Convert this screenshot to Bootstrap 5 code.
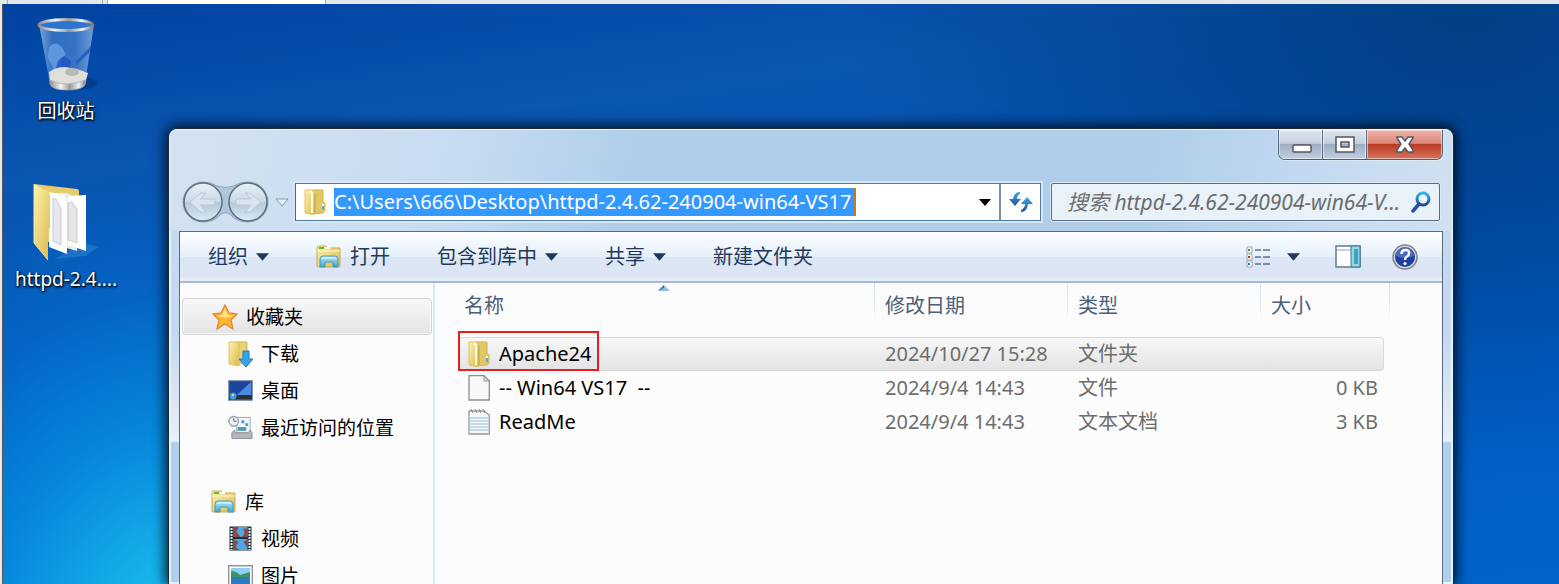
<!DOCTYPE html>
<html lang="zh-CN">
<head>
<meta charset="utf-8">
<meta name="viewport" content="width=device-width, initial-scale=1">
<title>httpd-2.4.62-240904-win64-VS17</title>
<link rel="stylesheet" href="https://cdn.jsdelivr.net/npm/bootstrap@5.3.0/dist/css/bootstrap.min.css">
<style>
body{font:20px/26px "Noto Sans","Noto Sans CJK SC",sans-serif;color:#000;background:#e6e8ea}
a{color:inherit;text-decoration:none}
svg{flex:none;display:block}
.host-strip{height:4px;background:#e3e6ea}
.host-strip i{border-right:1px solid #a9abad;border-left:1px solid #a9abad}
.host-strip .tab-a{width:96px;margin-left:7px}
.host-strip .tab-b{width:219px;margin-left:4px;background:#fff}
.desktop{margin-left:2px;border-left:1px solid #55585c;background:
 radial-gradient(ellipse 420px 460px at 12% 110%,#22c8f0 0,#14ace9 22%,#078cdfdd 48%,#0570d088 76%,#0568c800 100%),
 radial-gradient(ellipse 620px 460px at 94% 0,#003f82 0,#00408caa 45%,#00408c00 100%),
 linear-gradient(172deg,#0042a2 0,#0a56b0 22%,#0058bd 55%,#0064cc 100%)}
.shortcuts{width:126px;padding-top:10px;color:#fff;text-shadow:1px 1px 2px #000,0 1px 3px #000;font-size:19px}
.shortcuts a{height:168px}
.win{margin:124px 105px 0 39px;border:1px solid #1d2a36;border-bottom:0;border-radius:9px 9px 0 0;padding:0 10px;
 box-shadow:0 0 14px 2px #000c20,inset 0 0 0 2px #e5f1fb;
 background:linear-gradient(#c8dcf0 0,#c3d9f0 45%,#e8f0f8 312px,#b0cfec 314px)}
.win-top{margin:0 -9px;padding:0 9px;border-top:1px solid #eaf4fc;background:linear-gradient(100deg,#d3e2f2 0,#c8dcf1 22%,#b0ceea 36%,#b0ceea 76%,#c8dcf1 92%,#cfe1f2 100%);border-radius:8px 8px 0 0}
.caption-btns{height:30px;border:1px solid #4e5f72;border-top:0;border-radius:0 0 7px 7px;overflow:hidden;box-shadow:0 0 0 1px #e7f1fa99}
.caption-btns button{border:0;padding:0;border-right:1px solid #5b6b7d;width:44px;overflow:hidden;background:linear-gradient(#dfe7f0 0,#c5d0dc 46%,#9eafc2 50%,#c0cfe0 100%);box-shadow:inset 0 0 0 1px #ffffff88}
.caption-btns .btn-x{width:75px;border-right:0;background:linear-gradient(#eeb3a8 0,#dd8577 46%,#b93a22 50%,#d8745c 100%)}
.nav-row{padding:21px 3px 8px 2px}
.nav-row button{border:0;background:none;padding:0}
.addr{height:38px;margin:0 10px 0 2px;border:1px solid #4f7ea6;border-left-color:#56697c;background:#fff;box-shadow:0 0 0 2px #d5e7f6}
.addr input,.find input{border:0;outline:0;background:none;min-width:0;padding:0}
.addr label,.find label{display:contents}
.path-text{flex:0 0 522px;height:28px;line-height:28px;background:#3399ff!important;color:#fff;border-right:2px solid #c8782c!important}
.go{width:41px;height:36px;border-left:2px solid #7890a8!important}
.find{width:389px;height:38px;border:1px solid #5b6d80;border-radius:2px;background:#e9f1f9;box-shadow:0 0 0 1px #d9e9f7;padding:0 8px 0 15px}
.find input{font-style:italic;font-size:21px;height:34px;line-height:32px;color:#6d6d6d}
.find input::placeholder{color:#6d6d6d;opacity:1}
.client{border:1px solid #5b6b7d;border-bottom:0;background:#fcfcfc}
.cmdbar{height:51px;background:linear-gradient(#fff 0,#f3f8fe 20%,#e6f0fa 50%,#dce6f4 52%,#dbe5f4 92%,#e6edf8 94%);border-bottom:2px solid #a7bad3;color:#1e395b;padding:0 24px 0 28px}
.cmdbar button{border:0;background:none;padding:0;color:inherit;line-height:26px}
.cmdbar .cmd{margin-right:47px}
.cmdbar .view-pane{margin:0 31px 0 35px}
.side{width:255px;border-right:2px solid #dce8f6;padding:15px 1px 0 2px;font-size:19px}
.side a{height:37px;padding-left:46px;gap:8px}
.side .group-head{padding-left:29px}
.side .picked{border:1px solid #d4d4d4;border-radius:4px;background:linear-gradient(#f8f8f8,#e4e4e4);box-shadow:inset 0 0 0 1px #f8f8f8}
.side .libs{margin-top:37px}
.files{margin:0 58px 0 24px;table-layout:fixed;border-collapse:separate;border-spacing:0;flex:1 1 0;width:0}
.files th{height:54px;font-weight:400;color:#4c607a;vertical-align:top;padding:10px 0 0 10px;position:relative}
.files th:first-child{padding-left:5px}
.files th+th::before,.files th:last-child::after{content:"";position:absolute;left:-1px;top:0;width:1px;height:38px;background:linear-gradient(#cfe0f3,#e8eff8 70%,#fcfcfc)}
.files th:last-child::after{left:auto;right:-6px}
.files td{height:34px;padding:0 0 0 10px;color:#6d6d6d;position:relative;white-space:pre}
.files td:first-child{padding-left:9px}
.files td:last-child{text-align:right;padding-right:6px}
.files td a{color:#000;gap:9px}
.files .hit td{background:linear-gradient(#f8f8f8,#e3e3e3);border:solid #d9d9d9;border-width:1px 0}
.files .hit td:first-child{border-left-width:1px;border-radius:4px 0 0 4px;padding-left:8px}
.files .hit td:last-child{border-right-width:1px;border-radius:0 4px 4px 0}
.redmark{position:absolute;left:-2px;top:-7px;width:141px;height:40px;border:2px solid #ec1c24}
.sortmark{position:absolute;left:199px;top:1px}
.col-date,.col-kind{width:193px}.col-size{width:123px}
</style>
</head>
<body class="vh-100 overflow-hidden d-flex flex-column">
<svg width="0" height="0" class="position-absolute" aria-hidden="true">
 <defs>
  <linearGradient id="gold" x2="1" y2="1"><stop offset="0" stop-color="#fdf2b0"/><stop offset="1" stop-color="#dcb94a"/></linearGradient>
  <linearGradient id="aqua" x2="0" y2="1"><stop offset="0" stop-color="#b5ecfa"/><stop offset="1" stop-color="#3fa2cf"/></linearGradient>
  <linearGradient id="orb" x2="0" y2="1"><stop offset="0" stop-color="#e8f0f7"/><stop offset=".5" stop-color="#c9dae9"/><stop offset=".52" stop-color="#b3c9dc"/><stop offset="1" stop-color="#dbe9f5"/></linearGradient>
  <linearGradient id="blu" x2="0" y2="1"><stop offset="0" stop-color="#35b4e6"/><stop offset="1" stop-color="#27479c"/></linearGradient>
  <linearGradient id="glass" x2="1"><stop offset="0" stop-color="#a5c8f0" stop-opacity=".75"/><stop offset=".25" stop-color="#5e97dc" stop-opacity=".5"/><stop offset=".65" stop-color="#5c96dc" stop-opacity=".55"/><stop offset="1" stop-color="#a0c4ee" stop-opacity=".7"/></linearGradient>
  <linearGradient id="metal" x2="1"><stop offset="0" stop-color="#8d8d8d"/><stop offset=".3" stop-color="#f4f4f4"/><stop offset=".55" stop-color="#9a9a9a"/><stop offset=".8" stop-color="#f2f2f2"/><stop offset="1" stop-color="#777"/></linearGradient>
 </defs>
 <symbol id="folder" viewBox="0 0 22 26"><path d="M8 1h11v12l2 1v8l-2 2-11 1z" fill="#e2c766" stroke="#d3b34c"/><path d="M1 1h7l3 3v21l-3 .5L1 24z" fill="url(#gold)" stroke="#dec263"/><path d="M6 2l2 2v20" fill="none" stroke="#fffbe0" stroke-width="2"/><path d="M11 4v20" stroke="#c4a23c"/><rect x="18" y="16" width="2" height="5" rx="1" fill="#52a9dc"/><path d="M18 15h2v2h-2z" fill="#fff"/></symbol>
 <symbol id="library" viewBox="0 0 26 24"><path d="M1 3q0-2 2-2h7l2 2h12v18q0 1-1 1H2q-1 0-1-1z" fill="url(#gold)" stroke="#c9ab4c"/><path d="M9 3h5" stroke="#fff" stroke-width="2"/><path d="M3 3h5" stroke="#5dbb3b" stroke-width="2"/><path d="M1 6h23" stroke="#fff8cf"/><path d="M4 22V14q0-3 3-3h12q3 0 3 3v8h-5v-4q0-1-1-1h-6q-1 0-1 1v4z" fill="url(#aqua)" stroke="#3f9bc4"/><path d="M6 14q0-1 1-1h12q1 0 1 1" stroke="#e2faff" fill="none"/></symbol>
 <symbol id="caret" viewBox="0 0 12 7"><path d="M0 0h12L6 7z" fill="currentColor"/></symbol>
</svg>

<div class="host-strip d-flex flex-shrink-0"><i class="tab-a"></i><i class="tab-b"></i></div>

<main class="desktop d-flex flex-fill overflow-hidden">
 <nav class="shortcuts flex-shrink-0" aria-label="桌面">
  <a href="#" class="d-flex flex-column align-items-center">
   <svg width="64" height="84" viewBox="0 0 64 84"><ellipse cx="44" cy="69" rx="19" ry="7" fill="#00225c" opacity=".35"/><path d="M5 10l11 60q0 5 17 5t18-5L60 10z" fill="url(#glass)"/><path d="M15 33q7-8 14 2l3 6-6 4 2 6-6 9-8-16z" fill="#6c9fe2" opacity=".8"/><path d="M24 47l6-5 7 5-1 8-9 4-5-5z" fill="#2255c4" opacity=".85"/><path d="M57 32L42 47v4l13-12z" fill="#1c57b8" opacity=".8"/><path d="M15 58q7-5 16-5l12 2 11 4-3 11q-2 5-18 5t-17-6z" fill="#dededb"/><path d="M16 66q15 8 36 0l-1 5q-3 5-18 5t-17-6z" fill="url(#metal)" stroke="#a9a9a9" stroke-width=".7"/><ellipse cx="38" cy="58" rx="7" ry="4" fill="#b9bab7"/><ellipse cx="32" cy="11" rx="27" ry="5.500" fill="#2f74cd" stroke="url(#metal)" stroke-width="3"/></svg>
   <span>回收站</span>
  </a>
  <a href="#" class="d-flex flex-column align-items-center">
   <svg width="80" height="84" viewBox="3 3 80 84"><path d="M60 64l16 4-14 9-30 3z" fill="#5fb0f0" opacity=".25"/><path d="M11 5l43 5q2 0 2 3v50H25z" fill="#e6cc6c"/><path d="M26 14h18l10 5v53l-28-8z" fill="#e9e9e9"/><path d="M45 17l18-1v56l-18-6z" fill="#fff"/><path d="M45 24l4-1 5 7v34l-9-3z" fill="#e6e6e6" stroke="#bbb" stroke-width=".7"/><path d="M26 13l15 3 3 5v54l-18-7z" fill="#fdfdfd"/><path d="M30 20l3 0 5 10v36l-8-4z" fill="#e6e8ee" stroke="#bbb" stroke-width=".7"/><path d="M11 5l14 7q2 2 2 5v32l-2 2v30L11 64z" fill="url(#gold)"/><path d="M11 5v59l14 17" fill="none" stroke="#f7e698"/></svg>
   <span>httpd-2.4....</span>
  </a>
 </nav>

 <section class="win flex-fill d-flex flex-column" aria-label="资源管理器">
  <div class="win-top">
   <div class="d-flex justify-content-end">
    <div class="caption-btns d-flex">
     <button type="button" aria-label="最小化"><svg width="44" height="30" viewBox="0 0 44 30"><rect x="14" y="15" width="18" height="7" rx="1" fill="#fff" stroke="#535666" stroke-width="1.500"/></svg></button>
     <button type="button" aria-label="最大化"><svg width="44" height="30" viewBox="0 0 44 30"><path fill-rule="evenodd" d="M13 7h18v15H13zM18 12v5h8v-5z" fill="#fff" stroke="#535666" stroke-width="1.500"/></svg></button>
     <button type="button" class="btn-x" aria-label="关闭"><svg width="75" height="30" viewBox="0 0 75 30"><path d="M30 7h5l3 4 3-4h5v1l-4 6 4 6v2h-5l-3-4-3 4h-5v-2l4-6-4-6z" fill="#fff" stroke="#535666" stroke-width="1.500"/></svg></button>
    </div>
   </div>
   <div class="nav-row d-flex align-items-center">
    <div class="d-flex align-items-center">
     <svg width="90" height="42" viewBox="0 0 90 42" role="img" aria-label="后退 前进"><path d="M22 1q8 0 14 4 9 3 17 0 5-4 14-4a20 20 0 0 1 0 40q-12 0-18-8-5-3-9 0-6 8-18 8a20 20 0 0 1 0-40z" fill="#b0c6dc" stroke="#8fa3b8"/><circle cx="22" cy="21" r="19" fill="url(#orb)" stroke="#5e6e7f" stroke-width="1.500"/><circle cx="67" cy="21" r="19" fill="url(#orb)" stroke="#5e6e7f" stroke-width="1.500"/><path d="M9 21l11-9h5l-6 6h15v6H19l6 7h-5zM80 21l-11-9h-5l6 6H55v6h15l-6 7h5z" fill="#d8e5f0" stroke="#b8c8d8"/></svg>
     <button type="button" class="mx-1" aria-label="最近的位置"><svg width="14" height="9" viewBox="0 0 14 9"><path d="M1 1h12L7 8z" fill="#e8f0f8" stroke="#8498ae"/></svg></button>
    </div>
    <div class="addr d-flex align-items-center flex-fill">
     <svg class="ms-2" width="22" height="26"><use href="#folder"/></svg>
     <label><span class="visually-hidden">地址</span><input class="path-text ms-2" value="C:\Users\666\Desktop\httpd-2.4.62-240904-win64-VS17"></label>
     <button type="button" class="ms-auto me-2 text-black" aria-label="历史"><svg width="12" height="7"><use href="#caret"/></svg></button>
     <button type="button" class="go d-flex align-items-center justify-content-center" aria-label="刷新"><svg width="24" height="22" viewBox="0 0 24 22"><path d="M11 1Q5 1 4 8H0l6 7 6-7H8q0-4 3-5z" fill="url(#blu)"/><path d="M12 21q6 0 7-8h5l-6-7-6 7h4q0 4-4 6z" fill="url(#blu)"/></svg></button>
    </div>
    <div class="find d-flex align-items-center">
     <label><span class="visually-hidden">搜索</span><input class="flex-fill" type="text" placeholder="搜索 httpd-2.4.62-240904-win64-V..."></label>
     <svg width="20" height="22" viewBox="0 0 20 22"><circle cx="12" cy="8" r="6" fill="#eaf6fd" stroke="url(#blu)" stroke-width="3"/><path d="M8 13l-6 7" stroke="#2a4fa8" stroke-width="3.500" stroke-linecap="round"/></svg>
    </div>
   </div>
  </div>

  <div class="client flex-fill d-flex flex-column">
   <div class="cmdbar d-flex align-items-center flex-shrink-0">
    <button type="button" class="cmd d-flex align-items-center gap-2">组织 <svg width="13" height="8"><use href="#caret"/></svg></button>
    <button type="button" class="cmd d-flex align-items-center gap-2"><svg width="26" height="24"><use href="#library"/></svg>打开</button>
    <button type="button" class="cmd d-flex align-items-center gap-2">包含到库中 <svg width="13" height="8"><use href="#caret"/></svg></button>
    <button type="button" class="cmd d-flex align-items-center gap-2">共享 <svg width="13" height="8"><use href="#caret"/></svg></button>
    <button type="button">新建文件夹</button>
    <div class="d-flex align-items-center ms-auto">
     <button type="button" class="d-flex align-items-center gap-3" aria-label="更改视图"><svg width="25" height="22" viewBox="0 0 25 22"><path d="M1 1h5v6H1zM1 8h5v6H1zM1 15h5v6H1z" fill="#fff" stroke="#9aa7b5"/><path d="M2 4h2" stroke="#4c8a2d" stroke-width="2"/><path d="M2 11h2" stroke="#e02020" stroke-width="2"/><path d="M2 18h2" stroke="#2a6fd0" stroke-width="2"/><path d="M9 4h6m2 0h7M9 11h6m2 0h7M9 18h6m2 0h7" stroke="#5b6f8a" stroke-width="1.500"/></svg><svg width="13" height="8"><use href="#caret"/></svg></button>
     <button type="button" class="view-pane" aria-label="预览窗格"><svg width="26" height="23" viewBox="0 0 26 23"><path d="M1 1h24v21H1z" fill="#fff" stroke="#63798f" stroke-width="1.500"/><path d="M1 5h15" stroke="#8aa0b5"/><path d="M16 1h9v21h-9z" fill="#8fd8e8" stroke="#48707f"/><path d="M19 4h4v15h-4z" fill="#3fa2c4"/></svg></button>
     <button type="button" class="help" aria-label="帮助"><svg width="26" height="26" viewBox="0 0 26 26"><circle cx="13" cy="13" r="12" fill="#dcdcdc" stroke="#7f8288" stroke-width="1.500"/><circle cx="13" cy="13" r="10" fill="#1d3ea4"/><path d="M4 12a9 9 0 0 1 18 0q-9 4-18 0z" fill="#6c8ee0" opacity=".55"/><path d="M9.500 10q0-4 4-4t3.500 3.500q0 2-2 3T13 16" fill="none" stroke="#fff" stroke-width="2.500"/><circle cx="13" cy="19.500" r="1.600" fill="#fff"/></svg></button>
    </div>
   </div>

   <div class="d-flex align-items-stretch flex-fill">
    <nav class="side flex-shrink-0" aria-label="导航窗格">
     <a href="#" class="group-head picked d-flex align-items-center"><svg width="26" height="26" viewBox="0 0 26 26"><path d="M13 1l4 8 8 1-6 6 2 9-8-5-8 5 2-9-6-6 8-1z" fill="#ffb52e" stroke="#e08a35" stroke-width="1.300"/><path d="M13 4l3 7 6 1-9 2-9-2 6-1z" fill="#ffe089"/></svg>收藏夹</a>
     <a href="#" class="d-flex align-items-center"><svg width="25" height="26" viewBox="0 0 25 26"><path d="M9 1h10v20L9 24z" fill="#e8cf78" stroke="#d3b34c"/><path d="M1 1h8l2 3v21l-10-2z" fill="url(#gold)" stroke="#dec263"/><path d="M15 10h6v8h4l-7 8-7-8h4z" fill="#35a3ec" stroke="#2378bd"/></svg>下载</a>
     <a href="#" class="d-flex align-items-center"><svg width="25" height="21" viewBox="0 0 25 21"><path d="M.5.5h24v20H.5z" fill="#2555b5" stroke="#8a98ad"/><path d="M2 2h21L8 15H2z" fill="#1b459c"/><path d="M23 2v13H9z" fill="#4d8ae4"/><path d="M1 15h23v4H1z" fill="#2d3138"/><circle cx="5" cy="16" r="3.500" fill="#3f9ae0"/><path d="M4 14h2v2H4z" fill="#f6d25a"/></svg>桌面</a>
     <a href="#" class="d-flex align-items-center"><svg width="25" height="25" viewBox="0 0 26 25"><path d="M9 2h14v16H9z" fill="#f6f8fa" stroke="#9fa6ae"/><path d="M14 5h3v3h-3zM18 8h3v3h-3z" fill="#3b9be6"/><path d="M10 12h9v4h-9z" fill="#4b9fae"/><path d="M4 18l3-3v3h14l2-3 2 3v6H4z" fill="#b4b8bc" stroke="#8c9094"/><circle cx="6" cy="6" r="5" fill="#eef2f5" stroke="#9aa3ab" stroke-width="1.500"/><path d="M6 3v3h3" fill="none" stroke="#666"/></svg>最近访问的位置</a>
     <a href="#" class="group-head libs d-flex align-items-center"><svg width="26" height="24"><use href="#library"/></svg>库</a>
     <a href="#" class="d-flex align-items-center"><svg width="25" height="25" viewBox="0 0 24 25"><path d="M1 .5h22v24H1z" fill="#1d3438"/><path d="M5 1h14v10H5zM5 13h14v11H5z" fill="#4ea7ea"/><path d="M5 1h5l-2 5 4 5H5zM19 2v9h-6l3-3-1-5zM5 13l5 3-3 5 4 3H5zM19 13v9l-4-6z" fill="#8b4a46"/><path d="M3 2v22M21 2v22" stroke="#e6edf0" stroke-width="2" stroke-dasharray="2 1"/></svg>视频</a>
     <a href="#" class="d-flex align-items-center"><svg width="25" height="22" viewBox="0 0 25 22"><path d="M.7.700h23.600v20.600H.7z" fill="#fff" stroke="#8f969e" stroke-width="1.400"/><path d="M3 3h19v16H3z" fill="#8fd0f5"/><path d="M3 6q5 0 9 4l10-3v6H3z" fill="#3f9166"/><path d="M3 12h19v7H3z" fill="#2a7cc0"/></svg>图片</a>
    </nav>
    <table class="files align-self-start">
     <colgroup><col><col class="col-date"><col class="col-kind"><col class="col-size"></colgroup>
     <thead><tr><th>名称<svg class="sortmark" width="12" height="7" viewBox="0 0 12 7"><path d="M0 7l6-6 6 6z" fill="#8cc4dd"/><path d="M0 7l6-6v3z" fill="#3f6f8f"/></svg></th><th>修改日期</th><th>类型</th><th>大小</th></tr></thead>
     <tbody>
      <tr class="hit"><td><a href="#" class="d-flex align-items-center"><svg width="22" height="26"><use href="#folder"/></svg>Apache24</a><span class="redmark"></span></td><td>2024/10/27 15:28</td><td>文件夹</td><td></td></tr>
      <tr><td><a href="#" class="d-flex align-items-center"><svg width="22" height="26" viewBox="0 0 22 26"><path d="M1 .7h15l5.300 5V25H1z" fill="#f8f8f8" stroke="#8e8e8e" stroke-width="1.300"/><path d="M16 1v5h5z" fill="#ddd" stroke="#999"/></svg>-- Win64 VS17  --</a></td><td>2024/9/4 14:43</td><td>文件</td><td>0 KB</td></tr>
      <tr><td><a href="#" class="d-flex align-items-center"><svg width="22" height="26" viewBox="0 0 22 26"><path d="M1 2h15l5.300 4V25H1z" fill="#f5f7f8" stroke="#9a9a9a" stroke-width="1.300"/><path d="M2 9h18M2 12h18M2 15h18M2 18h18M2 21h18" stroke="#b5cfdf" stroke-width="1.300"/><path d="M3 0l2 4M7 0l2 4M11 0l2 4M15 0l2 4" stroke="#888"/></svg>ReadMe</a></td><td>2024/9/4 14:43</td><td>文本文档</td><td>3 KB</td></tr>
     </tbody>
    </table>
   </div>
  </div>
 </section>
</main>
<script src="https://cdn.jsdelivr.net/npm/bootstrap@5.3.0/dist/js/bootstrap.bundle.min.js"></script>
</body>
</html>
